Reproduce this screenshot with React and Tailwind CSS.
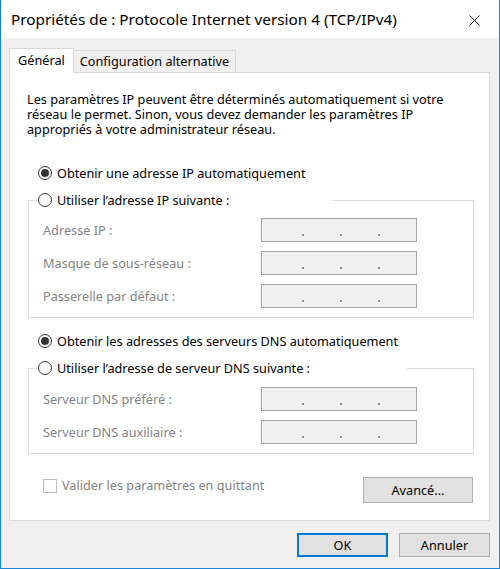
function Radio({ checked }) {
  return (
    <span className="w-[14px] h-[14px] rounded-full border border-[#333333] bg-white flex items-center justify-center shrink-0">
      {checked && <span className="w-[8px] h-[8px] rounded-full bg-[#333333]" />}
    </span>
  );
}

function IpBox() {
  return (
    <div className="w-[156px] h-[24px] bg-[#f0f0f0] border border-[#a3a3a3] flex pl-[40px] pt-[15px] gap-[36px]">
      <span className="w-[2px] h-[2px] bg-[#8a8a8a]" />
      <span className="w-[2px] h-[2px] bg-[#8a8a8a]" />
      <span className="w-[2px] h-[2px] bg-[#8a8a8a]" />
    </div>
  );
}

function FieldRow({ label }) {
  return (
    <div className="flex items-center">
      <span className="w-[232px] pl-[14px] text-[#838383]">{label}</span>
      <IpBox />
    </div>
  );
}

export default function App() {
  return (
    <div className="w-[500px] h-[569px] bg-[#f0f0f0] border-x border-b border-[#1883d7] flex flex-col font-['Noto_Sans',sans-serif] text-[12.7px] leading-[15px] text-black">
      <div className="h-[38px] shrink-0 bg-white flex items-center justify-between pl-[10px] pr-[19px]">
        <span className="text-[15.3px] leading-[20px]">Propriétés de : Protocole Internet version 4 (TCP/IPv4)</span>
        <svg width="11" height="11" viewBox="0 0 11 11" className="mt-[2px]">
          <path d="M0.5 0.5 L10.5 10.5 M10.5 0.5 L0.5 10.5" stroke="#111" strokeWidth="1" fill="none" />
        </svg>
      </div>

      <div className="flex items-end pl-[8px] mt-[10px] h-[24px]">
        <div className="relative z-10 -mb-px h-[25px] w-[65px] bg-white border border-b-0 border-[#d9d9d9] flex items-center justify-center pb-[2px]">
          Général
        </div>
        <div className="h-[22px] w-[162px] border border-l-0 border-b-0 border-[#d9d9d9] flex items-center justify-center">
          Configuration alternative
        </div>
      </div>

      <div className="ml-[8px] w-[481px] h-[449px] bg-white border border-[#d9d9d9] flex flex-col pl-[18px] pt-[19px]">
        <p className="-ml-[1px] w-[430px]">
          Les paramètres IP peuvent être déterminés automatiquement si votre réseau le permet. Sinon, vous devez demander les paramètres IP appropriés à votre administrateur réseau.
        </p>

        <div className="mt-[28px] h-[16px] flex items-center pl-[10px] gap-[5px]">
          <Radio checked />
          <span>Obtenir une adresse IP automatiquement</span>
        </div>

        <fieldset className="mt-[11px] w-[446px] border border-[#dcdcdc] pb-[9px]">
          <legend className="ml-[9px] w-[294px] h-[16px] flex items-center gap-[5px]">
            <Radio />
            <span>Utiliser l’adresse IP suivante :</span>
          </legend>
          <div className="mt-[10px] flex flex-col gap-[9px]">
            <FieldRow label="Adresse IP :" />
            <FieldRow label="Masque de sous-réseau :" />
            <FieldRow label="Passerelle par défaut :" />
          </div>
        </fieldset>

        <div className="mt-[15px] h-[16px] flex items-center pl-[10px] gap-[5px]">
          <Radio checked />
          <span>Obtenir les adresses des serveurs DNS automatiquement</span>
        </div>

        <fieldset className="mt-[11px] w-[446px] border border-[#dcdcdc] pb-[9px]">
          <legend className="ml-[9px] w-[369px] h-[16px] flex items-center gap-[5px]">
            <Radio />
            <span>Utiliser l’adresse de serveur DNS suivante :</span>
          </legend>
          <div className="mt-[11px] flex flex-col gap-[9px]">
            <FieldRow label="Serveur DNS préféré :" />
            <FieldRow label="Serveur DNS auxiliaire :" />
          </div>
        </fieldset>

        <div className="mt-[23px] w-[446px] flex items-start justify-between">
          <div className="ml-[15px] flex items-center gap-[5px] pt-[1px]">
            <span className="w-[14px] h-[14px] border border-[#bcbcbc] bg-white" />
            <span className="text-[#838383]">Valider les paramètres en quittant</span>
          </div>
          <button className="mr-[1px] w-[110px] h-[26px] bg-[#e1e1e1] border border-[#adadad] flex items-center justify-center">
            Avancé...
          </button>
        </div>
      </div>

      <div className="mt-[12px] flex justify-end gap-[11px] pr-[9px]">
        <button className="w-[91px] h-[24px] bg-[#e1e1e1] border-2 border-[#0078d7] flex items-center justify-center">
          OK
        </button>
        <button className="w-[91px] h-[24px] bg-[#e1e1e1] border border-[#adadad] flex items-center justify-center">
          Annuler
        </button>
      </div>
    </div>
  );
}
